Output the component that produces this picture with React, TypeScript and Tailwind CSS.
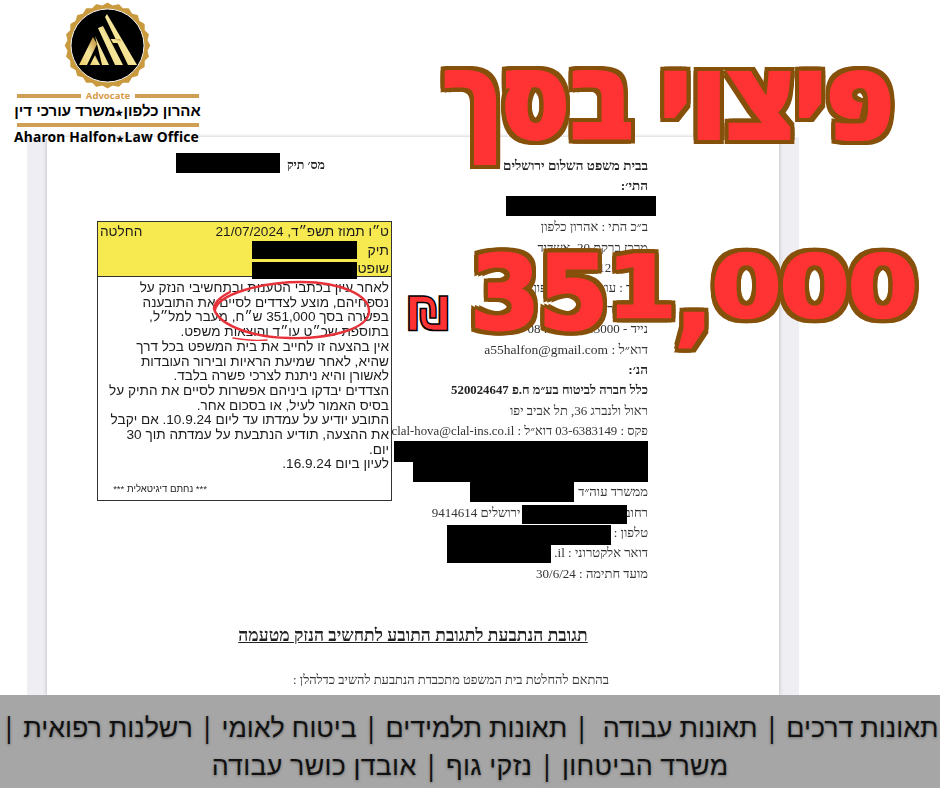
const scallop = (() => {
  const cx = 107.5, cy = 45.5, n = 24;
  let d = "";
  for (let i = 0; i < n * 2; i++) {
    const r = i % 2 === 0 ? 42 : 39.5;
    const a = (i / (n * 2)) * Math.PI * 2;
    d += (i === 0 ? "M" : "L") + (cx + r * Math.cos(a)).toFixed(1) + " " + (cy + r * Math.sin(a)).toFixed(1);
  }
  return d + "Z";
})();

function Logo() {
  return (
    <div className="absolute left-0 top-0 w-[215px] h-[145px]">
      <svg width="215" height="92" viewBox="0 0 215 92" className="block">
        <defs>
          <linearGradient id="g" x1="0" y1="1" x2="1" y2="0">
            <stop offset="0" stopColor="#f0cf6e" />
            <stop offset="0.5" stopColor="#f6e69a" />
            <stop offset="1" stopColor="#b5832c" />
          </linearGradient>
        </defs>
        <path d={scallop} fill="#c99a3e" stroke="#c99a3e" strokeLinejoin="round" strokeWidth="1.5" />
        <circle cx="107.5" cy="45.5" r="36.5" fill="#000" stroke="#f2f2f2" strokeWidth="1" />
        <g fill="url(#g)">
          <polygon points="93,37 97,44 87,65 79,65" />
          <polygon points="95,36 109,65 102,65 97,44" />
          <polygon points="98,28 103,26 123,65 115,65" />
          <polygon points="105,17 107,14 137,65 128,65" />
          <polygon points="90,65 95,55 100,65" />
          <polygon points="110.7,39 120,39 122,43 113,43" />
        </g>
      </svg>
      <div className="flex items-center justify-center gap-[5px] w-[182px] ml-[17px] h-[8px]">
        <div className="h-[4px] flex-1 bg-[#cf9f56]" />
        <div className="text-[9.5px] leading-[8px] font-bold text-[#d69c4c] font-['Noto_Sans',sans-serif]">Advocate</div>
        <div className="h-[4px] flex-1 bg-[#cf9f56]" />
      </div>
      <div dir="rtl" className="w-[215px] text-center text-[#000] font-bold text-[15px] leading-[18px] mt-[2px] whitespace-nowrap font-['Liberation_Sans',sans-serif]">
        אהרון כלפון<span className="text-[9px]">★</span>משרד עורכי דין
      </div>
      <div className="h-[4px] w-[182px] ml-[17px] bg-[#cf9f56] mt-[1px]" />
      <div className="w-[213px] text-center text-[#000] font-bold text-[13.8px] leading-[18px] mt-[1px] whitespace-nowrap font-['Noto_Sans',sans-serif] tracking-[0.2px]">
        Aharon Halfon<span className="text-[9px]">★</span>Law Office
      </div>
    </div>
  );
}

const Bar = ({ className }: { className: string }) => <div className={"absolute bg-black " + className} />;

const rowCls = "relative h-[20.4px] leading-[20.4px] whitespace-nowrap";

function RightCol() {
  return (
    <div dir="rtl" className="w-[256px] pt-[19px] text-[13px] text-[#333] font-['Liberation_Serif',serif]">
      <div className={rowCls + " font-bold text-[#222] text-[13.5px]"}>בבית משפט השלום ירושלים</div>
      <div className={rowCls + " font-bold text-[#222] text-[13.5px]"}>התי׳:</div>
      <div className={rowCls}><Bar className="-right-[8px] -top-[1px] w-[150px] h-[20px]" /></div>
      <div className={rowCls}>ב״כ התי : אהרון כלפון</div>
      <div className={rowCls}>מרכז ברקת 20, אשדוד</div>
      <div className={rowCls}>טל׳: 08-8521234</div>
      <div className={rowCls}>עו״ד : עו״ד אהרון כלפון 8895</div>
      <div className={rowCls}>רחוב הרצל 18</div>
      <div className={rowCls}>נייד - 055-5513000 : 08</div>
      <div className={rowCls + " text-[13.5px]"}>דוא״ל : a55halfon@gmail.com</div>
      <div className={rowCls + " font-bold text-[#222] text-[13.5px]"}>הנ׳:</div>
      <div className={rowCls + " font-bold text-[#222] text-[12.8px]"}>כלל חברה לביטוח בע״מ ח.פ 520024647</div>
      <div className={rowCls}>ראול ולנברג 36, תל אביב יפו</div>
      <div className={rowCls + " text-[12.8px]"}>פקס : 03-6383149 דוא״ל : clal-hova@clal-ins.co.il</div>
      <div className={rowCls}><Bar className="right-0 top-0 w-[254px] h-[20.4px]" /></div>
      <div className={rowCls}><Bar className="right-0 top-0 w-[235px] h-[20px]" /></div>
      <div className={rowCls}>ממשרד עוה״ד<Bar className="right-[74px] top-0 w-[104px] h-[20px]" /></div>
      <div className={rowCls}>רחוב&nbsp;&nbsp;&nbsp;&nbsp;&nbsp;&nbsp;&nbsp;&nbsp;&nbsp;&nbsp;&nbsp;&nbsp;&nbsp;&nbsp;&nbsp;&nbsp;&nbsp;&nbsp;&nbsp;&nbsp;&nbsp;&nbsp;&nbsp;&nbsp;&nbsp;&nbsp;&nbsp;&nbsp;&nbsp;&nbsp;&nbsp;&nbsp;ירושלים 9414614<Bar className="right-[21px] top-[2px] w-[105px] h-[19px]" /></div>
      <div className={rowCls}>טלפון :<Bar className="right-[37px] top-[2px] w-[164px] h-[20px]" /></div>
      <div className={rowCls}>דואר אלקטרוני : il.<Bar className="right-[97px] top-[2px] w-[104px] h-[18px]" /></div>
      <div className={rowCls}>מועד חתימה : 30/6/24</div>
    </div>
  );
}

const verdictLines = [
  "לאחר עיון בכתבי הטענות ובתחשיבי הנזק על",
  "נספחיהם, מוצע לצדדים לסיים את התובענה",
  "בפשרה בסך 351,000 ש״ח, מעבר למל״ל,",
  "בתוספת שכ״ט עו״ד והוצאות משפט.",
  "אין בהצעה זו לחייב את בית המשפט בכל דרך",
  "שהיא, לאחר שמיעת הראיות ובירור העובדות",
  "לאשורן והיא ניתנת לצרכי פשרה בלבד.",
  "הצדדים יבדקו ביניהם אפשרות לסיים את התיק על",
  "בסיס האמור לעיל, או בסכום אחר.",
  "התובע יודיע על עמדתו עד ליום 10.9.24. אם יקבל",
  "את ההצעה, תודיע הנתבעת על עמדתה תוך 30",
  "יום.",
  "לעיון ביום 16.9.24.",
];

function VerdictBox() {
  return (
    <div dir="rtl" className="relative w-[295px] h-[280px] border border-[#333] font-['Liberation_Sans',sans-serif] text-[#1c1c1c] flex flex-col">
      <div className="h-[55px] bg-[#f7ea50] border-b border-[#333] px-[2px] text-[14px] leading-[18px] pt-[1px]">
        <div className="flex justify-between text-[13.6px]"><span>ט״ו תמוז תשפ״ד, 21/07/2024</span><span>החלטה</span></div>
        <div className="relative">תיק</div>
        <div>שופט</div>
      </div>
      <Bar className="left-[154px] top-[19px] w-[105px] h-[18px]" />
      <Bar className="left-[154px] top-[40px] w-[105px] h-[17px]" />
      <div className="px-[2px] pt-[4px] text-[13.6px] leading-[14.7px] whitespace-nowrap">
        {verdictLines.map((l) => <div key={l}>{l}</div>)}
      </div>
      <div className="mt-auto mb-[5px] pr-[184px] pl-[14px] text-[9.6px] leading-[12px] whitespace-nowrap">*** נחתם דיגיטאלית ***</div>
      <svg className="absolute left-[114px] top-[57px]" width="166" height="72" viewBox="0 0 166 72" fill="none">
        <path d="M3 31C6 15 50 3 90 3c38 0 68 13 67 30-1 17-39 27-79 26C45 59 8 48 2 30 2 24 8 18 18 13" stroke="#e8323a" strokeWidth="2.4" strokeLinecap="round" />
        <path d="M21 59c12 2 23 3 34 2" stroke="#e8323a" strokeWidth="1.4" strokeLinecap="round" />
      </svg>
    </div>
  );
}

export default function App() {
  const big =
    "absolute whitespace-nowrap text-[#ff3333] [filter:drop-shadow(4px_0_0_#85500a)_drop-shadow(-4px_0_0_#85500a)_drop-shadow(0_4px_0_#85500a)_drop-shadow(0_-4px_0_#85500a)]";
  const squat = "inline-block scale-y-[0.85] origin-[50%_13px]";
  return (
    <div className="relative w-[940px] h-[788px] overflow-hidden bg-white flex flex-col">
      <div className="h-[695px] pt-[137px] pl-[27px] pr-[141px] overflow-hidden">
        <div className="h-[558px] bg-[#eeeef3] px-[20px]">
          <div className="h-[558px] bg-white shadow-[0_0_4px_rgba(0,0,0,0.25)] blur-[0.35px]">
            <div className="flex h-[465px] pl-[50px]">
              <div className="w-[295px] flex flex-col">
                <div dir="rtl" className="relative h-[84px] pt-[19px] pr-[67px] text-[12.5px] font-bold text-[#222] font-['Liberation_Serif',serif]">
                  מס׳ תיק
                  <Bar className="right-[112px] top-[16px] w-[104px] h-[20px]" />
                </div>
                <VerdictBox />
              </div>
              <RightCol />
            </div>
            <div dir="rtl" className="flex flex-col items-center font-['Liberation_Serif',serif]">
              <div className="mt-[23px] text-[17.5px] leading-[20px] font-bold underline text-[#222]">תגובת הנתבעת לתגובת התובע לתחשיב הנזק מטעמה</div>
              <div className="mt-[28px] pl-[76px] text-[12.9px] leading-[14px] text-[#333]">בהתאם להחלטת בית המשפט מתכבדת הנתבעת להשיב כדלהלן :</div>
            </div>
          </div>
        </div>
      </div>
      <div dir="rtl" className="h-[93px] pt-[8px] bg-[#a6a6a6] flex flex-col items-center justify-center text-[#111] text-[26.8px] leading-[38px] whitespace-nowrap font-['Noto_Sans',sans-serif] [text-shadow:0_1px_3px_rgba(0,0,0,0.35)]">
        <div>תאונות דרכים | תאונות עבודה&nbsp; | תאונות תלמידים | ביטוח לאומי | רשלנות רפואית |</div>
        <div className="tracking-[0.3px]">משרד הביטחון | נזקי גוף | אובדן כושר עבודה</div>
      </div>

      <Logo />
      <div dir="rtl" className={big + " right-[46px] top-[33px] text-[106px] leading-[130px] font-black [-webkit-text-stroke:2px_#ff3333] font-['Open_Sans',sans-serif]"}>פיצוי בסך</div>
      <div className={big + " right-[24px] top-[234px] text-[101px] leading-[120px] font-bold tracking-[-2px] [-webkit-text-stroke:3px_#ff3333] font-['DejaVu_Sans',sans-serif]"}>
        35<span className={squat}>1</span><span className="relative top-[4px]">,</span><span className={squat}>000</span>
      </div>
      <div className="absolute left-[407px] top-[289px] text-[47px] leading-[50px] font-bold text-[#ff3333] [-webkit-text-stroke:1.5px_#000] font-['DejaVu_Sans',sans-serif]">₪</div>
    </div>
  );
}
